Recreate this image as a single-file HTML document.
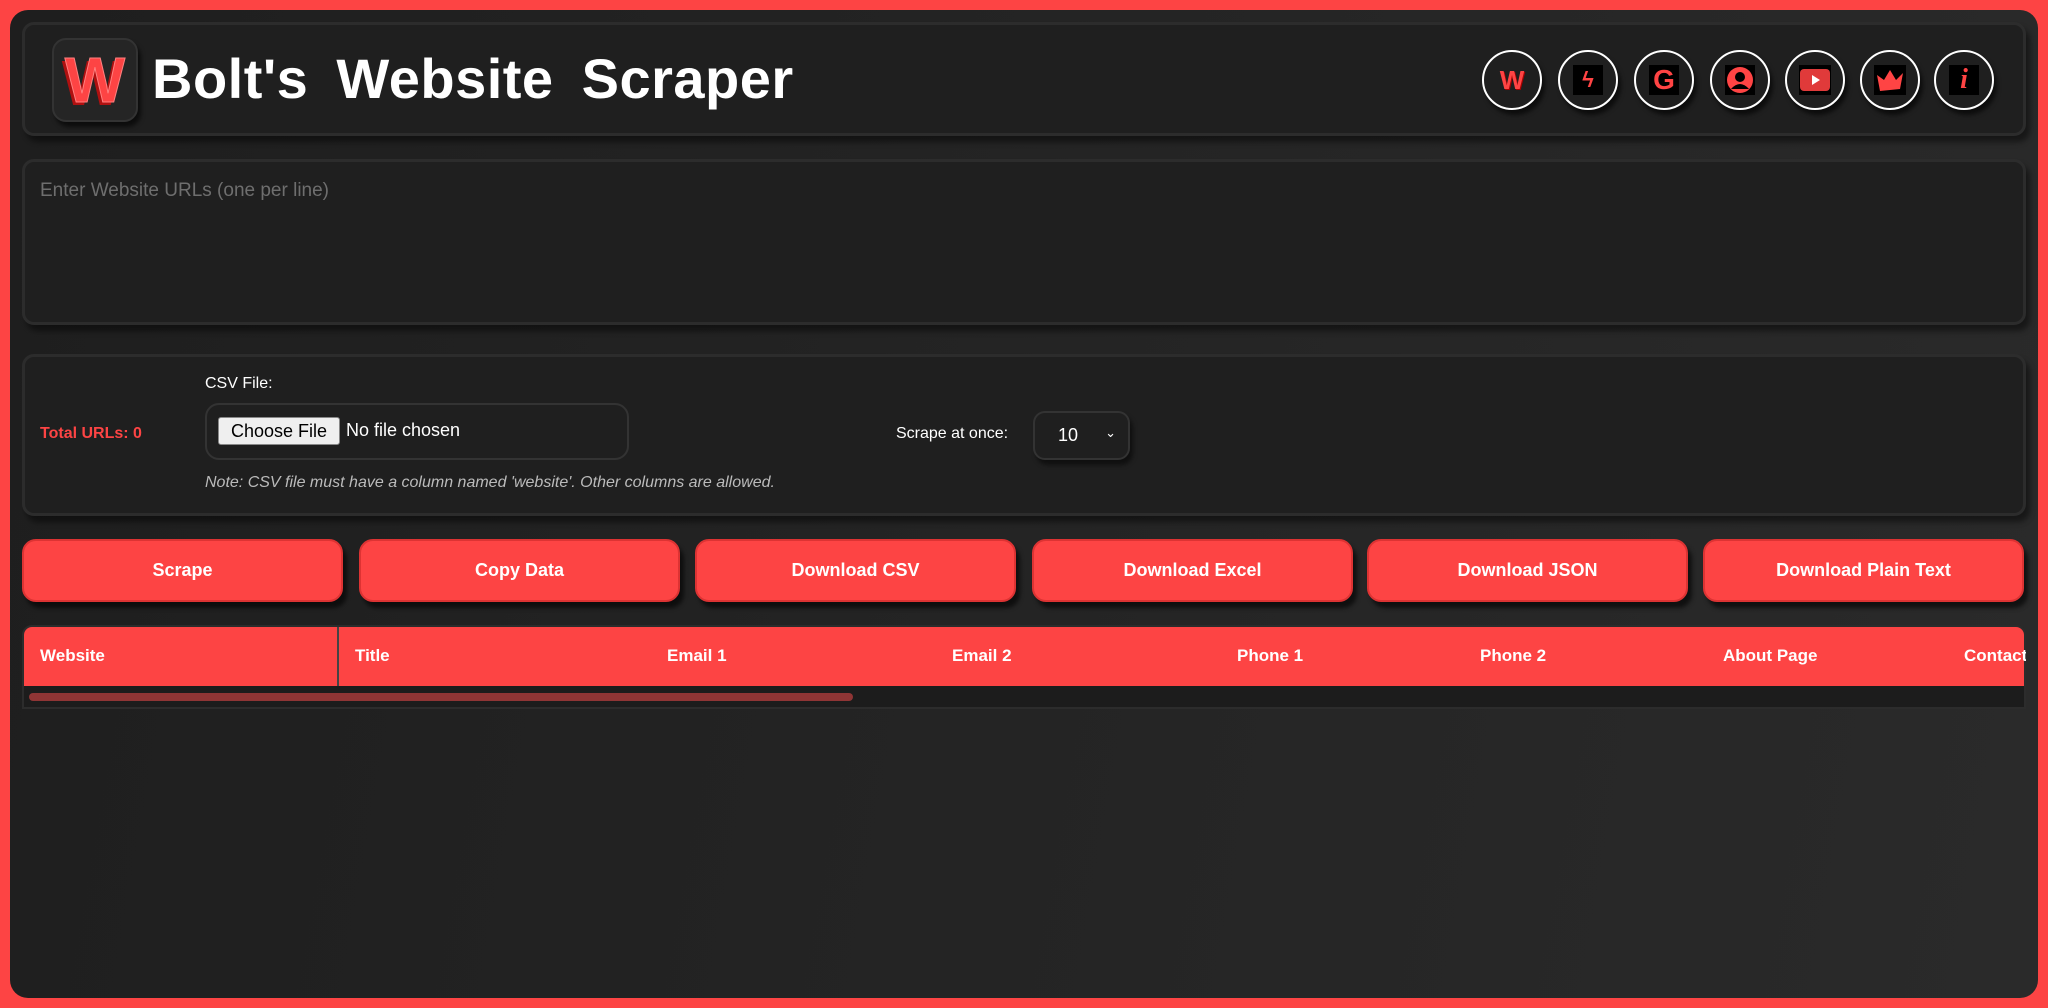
<!DOCTYPE html>
<html><head><meta charset="utf-8"><style>
*{box-sizing:border-box;margin:0;padding:0}
body{width:2048px;height:1008px;background:#fd4444;font-family:"Liberation Sans",sans-serif;overflow:hidden;position:relative}
.main{position:absolute;left:10px;top:10px;width:2028px;height:988px;border-radius:18px;background:linear-gradient(100deg,#1e1e1e 0%,#242424 50%,#2a2a2a 100%)}
.box{position:absolute;background:#1f1f1f;border:3px solid #2c2c2c;border-radius:12px;box-shadow:4px 6px 6px rgba(0,0,0,.45)}
.abs{position:absolute}
.circ{position:absolute;top:50px;width:60px;height:60px;border:2px solid #fff;border-radius:50%;background:#1f1f1f;box-shadow:3px 5px 4px rgba(0,0,0,.6);display:flex;align-items:center;justify-content:center}
.sq{width:30px;height:30px;background:#000;display:flex;align-items:center;justify-content:center;color:#f44;font-weight:bold}
.btn{position:absolute;top:539px;width:321px;height:63px;background:#fd4444;border-radius:14px;border:2px solid #d33;box-shadow:4px 6px 4px rgba(0,0,0,.6);color:#fff;font-weight:bold;font-size:18px;display:flex;align-items:center;justify-content:center}
.th{position:absolute;top:646px;color:#fff;font-weight:bold;font-size:17px}
</style></head><body>
<div class="main"></div>
<div class="box" style="left:22px;top:22px;width:2004px;height:114px"></div>
<div class="abs" style="left:52px;top:38px;width:86px;height:84px;background:#252525;border:2px solid #333;border-radius:14px;box-shadow:3px 5px 4px rgba(0,0,0,.6);display:flex;align-items:center;justify-content:center">
<div style="font-size:64px;font-weight:900;color:#fd4444;text-shadow:-3px 3px 0 #b01010;-webkit-text-stroke:1px #ff8080">W</div></div>
<div class="abs" style="left:152px;top:46px;font-size:56px;font-weight:bold;color:#fff;word-spacing:12px;letter-spacing:0.5px">Bolt's Website Scraper</div>
<div class="circ" style="left:1482px"><span style="color:#f44;font-weight:900;font-size:26px;text-shadow:1px 1px 0 #a00">W</span></div>
<div class="circ" style="left:1558px"><div class="sq" style="font-size:22px">ϟ</div></div>
<div class="circ" style="left:1634px"><div class="sq" style="font-size:28px;font-weight:900">G</div></div>
<div class="circ" style="left:1710px"><div class="sq"><svg width="28" height="28" viewBox="0 0 28 28"><circle cx="14" cy="14" r="13" fill="#f44"/><circle cx="14" cy="11" r="5" fill="#000"/><path d="M5 23 Q14 13 23 23Z" fill="#000"/></svg></div></div>
<div class="circ" style="left:1785px"><div class="sq" style="width:32px"><svg width="30" height="22" viewBox="0 0 30 22"><rect x="0" y="0" width="30" height="22" rx="4" fill="#e03a3a"/><path d="M12 6 L20 11 L12 16Z" fill="#fff"/></svg></div></div>
<div class="circ" style="left:1860px"><div class="sq" style="width:32px"><svg width="30" height="26" viewBox="0 0 30 26"><path d="M2 8 L9 13 L15 3 L21 13 L28 6 L25 22 L5 24Z" fill="#f44"/></svg></div></div>
<div class="circ" style="left:1934px"><div class="sq" style="font-size:28px;font-style:italic;font-family:'Liberation Serif',serif">i</div></div>

<div class="box" style="left:22px;top:159px;width:2004px;height:166px"></div>
<div class="abs" style="left:40px;top:180px;font-size:19px;color:#6e6e6e">Enter Website URLs (one per line)</div>

<div class="box" style="left:22px;top:354px;width:2004px;height:162px"></div>
<div class="abs" style="left:40px;top:425px;font-size:16px;font-weight:bold;color:#fd4444">Total URLs: 0</div>
<div class="abs" style="left:205px;top:375px;font-size:16px;color:#fff">CSV File:</div>
<div class="abs" style="left:205px;top:403px;width:424px;height:57px;border:2px solid #333;border-radius:14px;background:#1f1f1f"></div>
<div class="abs" style="left:218px;top:417px;width:122px;height:28px;background:#efefef;border:1px solid #888;border-radius:3px;font-size:18px;color:#000;display:flex;align-items:center;justify-content:center">Choose File</div>
<div class="abs" style="left:346px;top:420px;font-size:18px;color:#fff">No file chosen</div>
<div class="abs" style="left:205px;top:474px;font-size:16px;font-style:italic;color:#bbb">Note: CSV file must have a column named 'website'. Other columns are allowed.</div>
<div class="abs" style="left:896px;top:425px;font-size:16px;color:#fff">Scrape at once:</div>
<div class="abs" style="left:1033px;top:411px;width:97px;height:49px;border:2px solid #333;border-radius:12px;background:#1f1f1f;box-shadow:3px 5px 4px rgba(0,0,0,.5);color:#fff;font-size:18px;padding:12px 0 0 23px">10<span style="position:absolute;right:12px;top:12px;font-size:13px">&#8964;</span></div>

<div class="btn" style="left:22px">Scrape</div>
<div class="btn" style="left:359px">Copy Data</div>
<div class="btn" style="left:695px">Download CSV</div>
<div class="btn" style="left:1032px">Download Excel</div>
<div class="btn" style="left:1367px">Download JSON</div>
<div class="btn" style="left:1703px">Download Plain Text</div>

<div class="abs" style="left:22px;top:625px;width:2004px;height:84px;background:#1c1c1c;border:2px solid #2c2c2c;border-radius:10px 10px 0 0;overflow:hidden">
<div style="position:absolute;left:0;top:0;width:2004px;height:59px;background:#fd4444"></div>
<div style="position:absolute;left:313px;top:0;width:2px;height:59px;background:#444"></div>
<div style="position:absolute;left:5px;top:66px;width:824px;height:8px;border-radius:4px;background:#8f3535"></div>
</div>
<div class="th" style="left:40px">Website</div>
<div class="th" style="left:355px">Title</div>
<div class="th" style="left:667px">Email 1</div>
<div class="th" style="left:952px">Email 2</div>
<div class="th" style="left:1237px">Phone 1</div>
<div class="th" style="left:1480px">Phone 2</div>
<div class="th" style="left:1723px">About Page</div>
<div class="th" style="left:1964px;width:62px;overflow:hidden;white-space:nowrap">Contact</div>
</body></html>
